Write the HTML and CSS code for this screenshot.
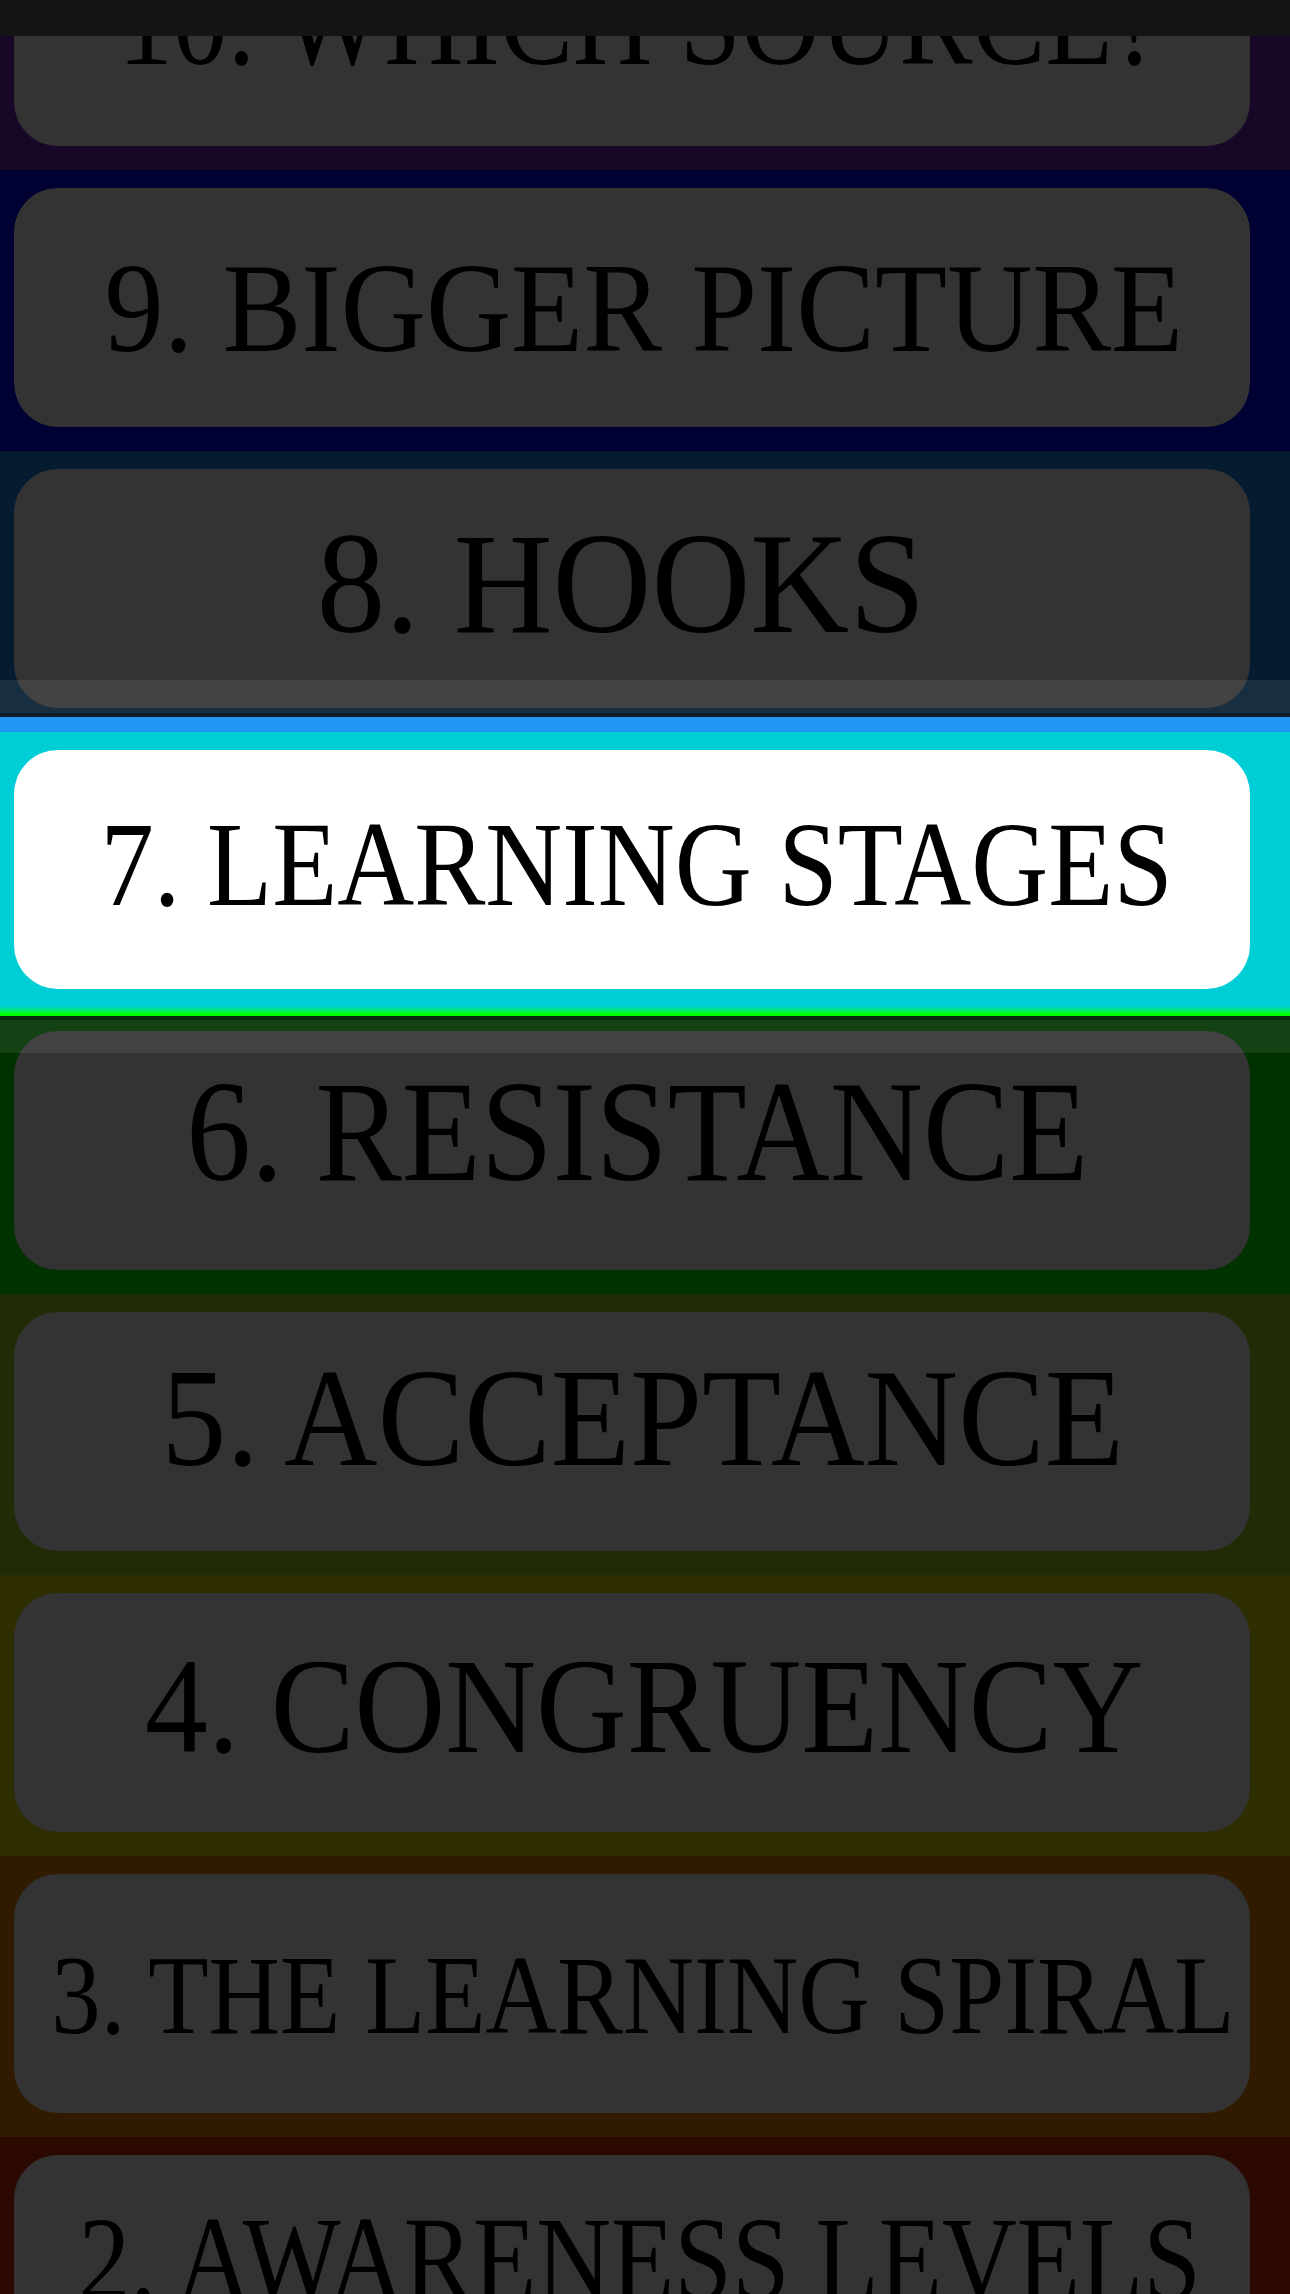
FILE: index.html
```html
<!DOCTYPE html>
<html lang="en">
<head>
<meta charset="utf-8">
<title>Chapters</title>
<link rel="stylesheet" href="styles.css">
</head>
<body>
<div class="topbar"></div>
<main class="list">
  <div class="row r10"><div class="card"><span class="label">10. WHICH SOURCE?</span></div></div>
  <div class="row r9"><div class="card"><span class="label">9. BIGGER PICTURE</span></div></div>
  <div class="row r8"><div class="card"><span class="label">8. HOOKS</span></div></div>
  <div class="row r7 selected"><div class="card"><span class="label">7. LEARNING STAGES</span></div></div>
  <div class="row r6"><div class="card"><span class="label">6. RESISTANCE</span></div></div>
  <div class="row r5"><div class="card"><span class="label">5. ACCEPTANCE</span></div></div>
  <div class="row r4"><div class="card"><span class="label">4. CONGRUENCY</span></div></div>
  <div class="row r3"><div class="card"><span class="label">3. THE LEARNING SPIRAL</span></div></div>
  <div class="row r2"><div class="card"><span class="label">2. AWARENESS LEVELS</span></div></div>
</main>
</body>
</html>
```

FILE: styles.css
```css
html, body {
  margin: 0;
  padding: 0;
}

body {
  background: #2c0900;
  font-family: "Liberation Serif", "Times New Roman", serif;
}

.topbar {
  position: fixed;
  top: 0;
  left: 0;
  right: 0;
  height: 36px;
  background: #141414;
  z-index: 10;
}

.list {
  margin-top: -111px;
}

.row {
  height: 281px;
  box-sizing: border-box;
  padding: 18px 40px 24px 14px;
}

.card {
  height: 239px;
  box-sizing: border-box;
  border-radius: 44px;
  background: #333333;
  display: flex;
  justify-content: center;
  align-items: flex-start;
  padding-left: 16px;
}

.label {
  display: inline-block;
  flex: none;
  white-space: nowrap;
  line-height: 1;
  color: #000;
  transform: translateX(var(--dx, 0px)) scaleX(var(--sx, 0.9));
}

/* band colours */
.r10 { background: #170827; }
.r9  { background: #000032; }
.r8  { background: #051c30; }
.r6  { background: #003200; }
.r5  { background: #212c06; }
.r4  { background: #2f2e00; }
.r3  { background: #301b00; }
.r2  { background: #2c0900; }

/* selected row: undimmed spotlight */
.selected {
  position: relative;
  z-index: 1;
  background: linear-gradient(to bottom, #00ced7 calc(100% - 7px), #00ff30 100%);
}

.selected .card {
  background: #ffffff;
}

.selected::before {
  content: "";
  position: absolute;
  left: 0;
  right: 0;
  top: -52px;
  height: 52px;
  background: linear-gradient(to bottom,
    rgba(255, 255, 255, 0.08) 0 33px,
    #0c1c2c 33px 37px,
    #2196f3 37px 52px);
}

.selected::after {
  content: "";
  position: absolute;
  left: 0;
  right: 0;
  top: 100%;
  height: 40px;
  background: linear-gradient(to bottom,
    #00ff00 0 3px,
    #0a2a0a 3px 7px,
    rgba(255, 255, 255, 0.08) 7px 40px);
}

/* per-item text fit */
.r10 .card { padding-top: 50px; }
.r10 .label { font-size: 128px; --sx: 0.857; }

.r9 .card { padding-top: 56px; }
.r9 .label { font-size: 128px; --sx: 0.922; --dx: 4px; }

.r8 .card { padding-top: 43px; }
.r8 .label { font-size: 144px; --sx: 0.951; --dx: -19px; }

.r7 .card { padding-top: 54px; }
.r7 .label { font-size: 121px; --sx: 0.881; --dx: -3px; }

.r6 .card { padding-top: 29px; }
.r6 .label { font-size: 144px; --sx: 0.898; --dx: -3px; }

.r5 .card { padding-top: 37px; }
.r5 .label { font-size: 139px; --sx: 0.933; --dx: 3px; }

.r4 .card { padding-top: 45px; }
.r4 .label { font-size: 136px; --sx: 0.924; --dx: 4px; }

.r3 .card { padding-top: 64px; }
.r3 .label { font-size: 113px; --sx: 0.874; --dx: 3px; }

.r2 .card { padding-top: 44px; }
.r2 .label { font-size: 121px; --sx: 0.856; }
```
